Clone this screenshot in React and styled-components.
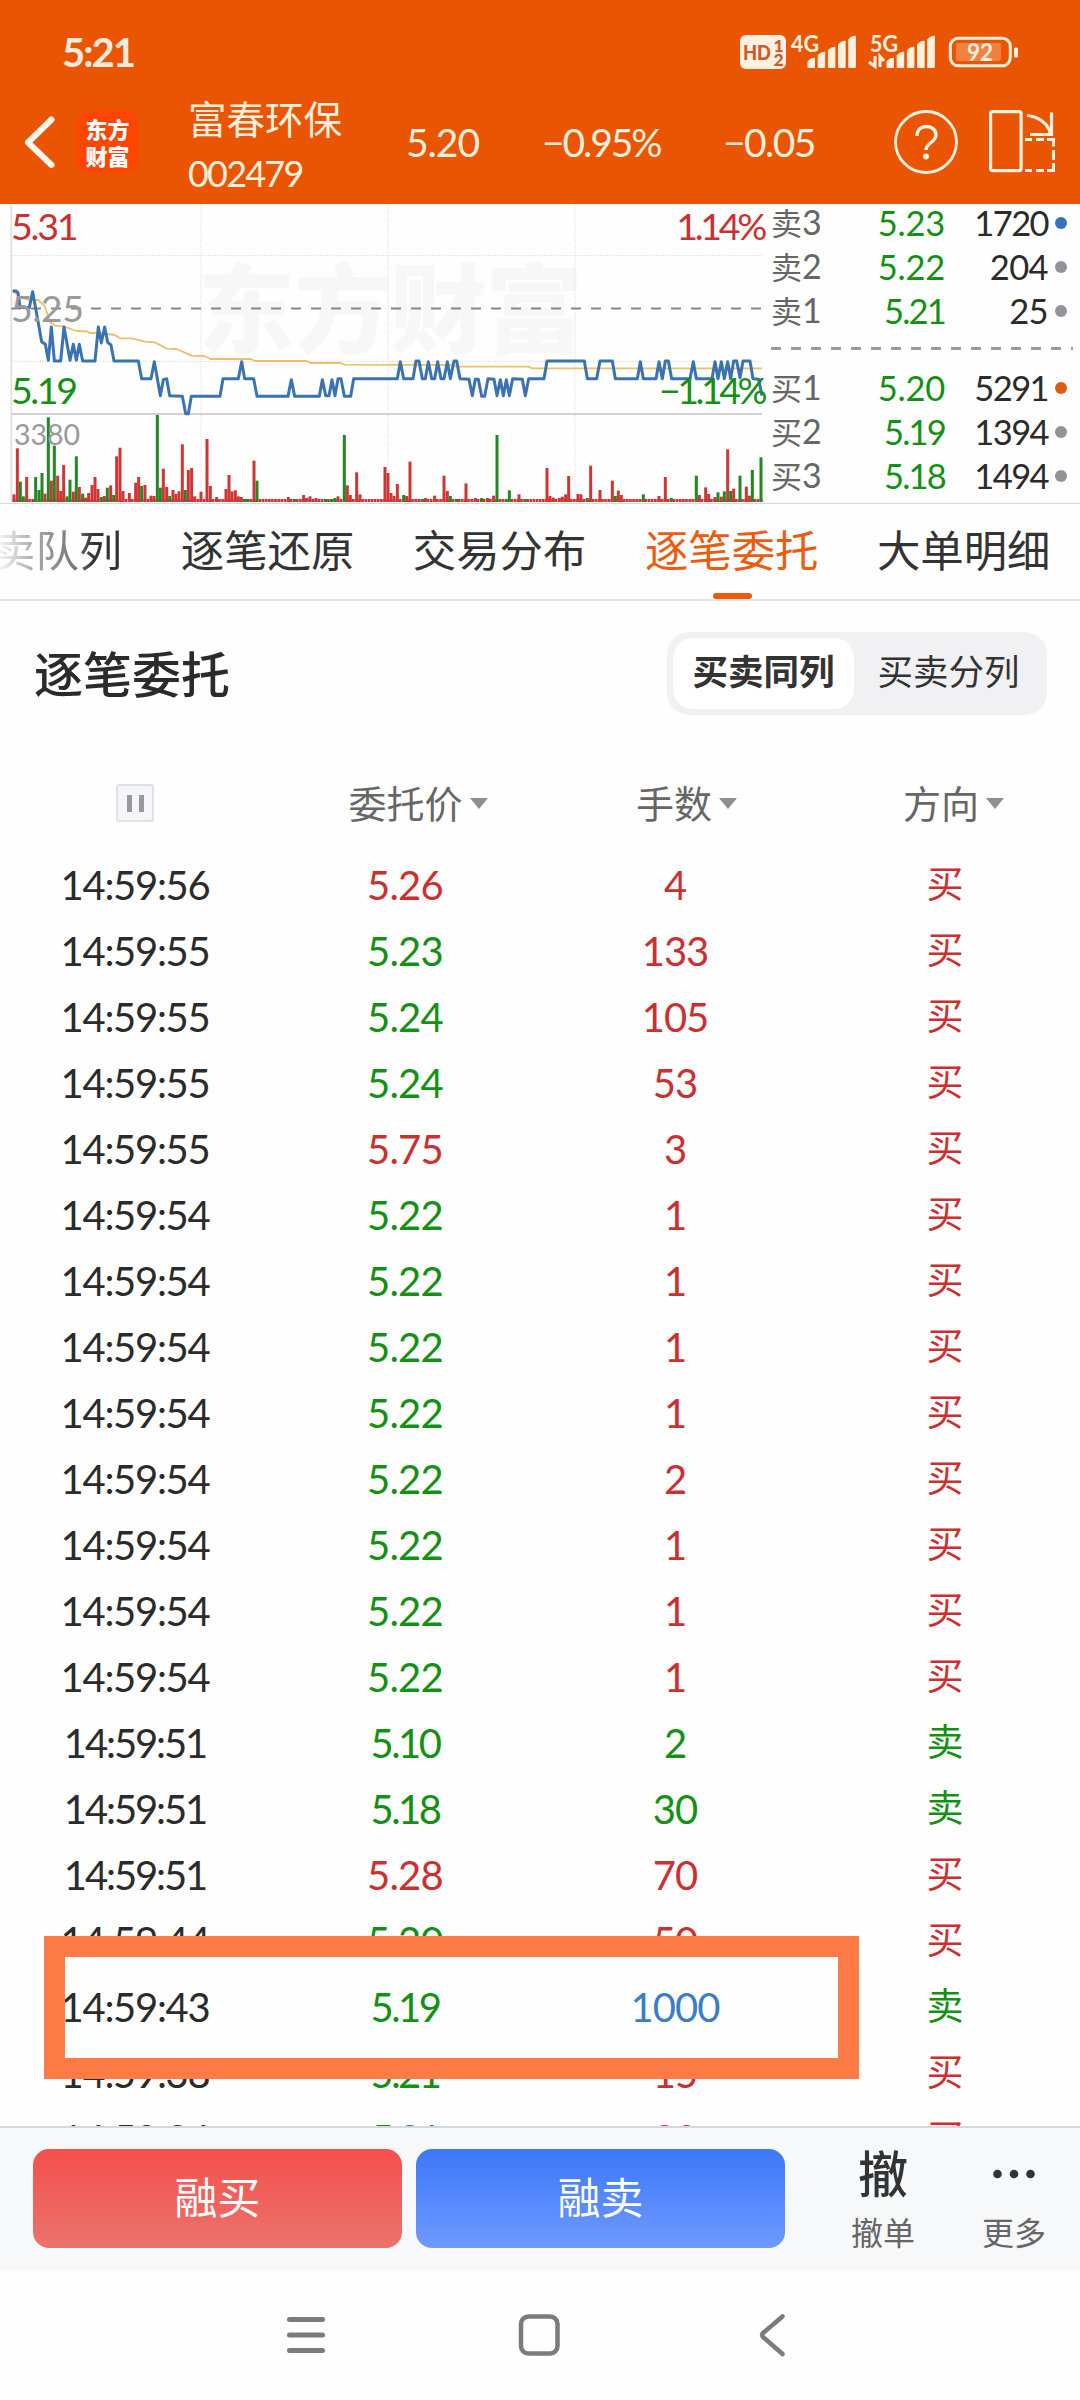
import React from "react";
import styled, { createGlobalStyle } from "styled-components";

const GlobalStyle = createGlobalStyle`
  * { box-sizing: border-box; }
  body {
    margin: 0;
    background: #fefefe;
    font-family: Lato, "Noto Sans CJK SC", sans-serif;
    color: #2b2b2b;
  }
`;

const C = {
  red: "#cb3030",
  green: "#149014",
  blue: "#3c7dc4",
  grey: "#666",
  cream: "#fff1de",
  brand: "#ea5504",
};

const Screen = styled.div`
  width: 1080px;
  height: 2400px;
  display: flex;
  flex-direction: column;
  overflow: hidden;
  background: #fefefe;
`;

const Txt = styled.span`
  display: block;
  white-space: nowrap;
  font-size: ${(p) => p.$size}px;
  line-height: ${(p) => p.$lh || p.$size}px;
  font-weight: ${(p) => p.$weight || 400};
  letter-spacing: ${(p) => p.$track || 0}px;
  color: ${(p) => p.$color || "inherit"};
`;

/* ---------- header ---------- */
const Header = styled.header`
  height: 204px;
  flex: none;
  background: ${C.brand};
  color: ${C.cream};
`;

const StatusBar = styled.div`
  height: 96px;
  display: flex;
  align-items: center;
  justify-content: space-between;
  padding: 8px 62px 0 62px;
`;

const StatusIcons = styled.svg`
  display: block;
  width: 280px;
  height: 40px;
  text {
    font-family: Lato, sans-serif;
    font-weight: 700;
  }
`;

const TitleBar = styled.div`
  height: 92px;
  display: flex;
  align-items: center;
  padding-left: 22px;
`;

const Logo = styled.div`
  width: 61px;
  height: 62px;
  margin-left: 20px;
  border-radius: 13px;
  background: #ff4503;
  color: #fff;
  display: grid;
  place-content: center;
  font: 900 22px/27px "Noto Sans CJK SC", sans-serif;
`;

const StockName = styled.div`
  width: 218px;
  margin-left: 50px;
  padding-top: 8px;
  display: flex;
  flex-direction: column;
  gap: 14px;
`;

const Quote = styled.div`
  width: ${(p) => p.$w}px;
`;

const LayoutWrap = styled.div`
  margin-left: 28px;
`;

const BackIcon = () => (
  <svg width="35" height="60" viewBox="0 0 35 60" fill="none">
    <path d="M29.5 7.5 6 30.5l23.500 22.500" stroke="#fff8ee" strokeWidth="6" strokeLinecap="round" strokeLinejoin="round" />
  </svg>
);

const HelpIcon = () => (
  <svg width="66" height="66" viewBox="0 0 66 66" fill="none" stroke={C.cream}>
    <circle cx="33" cy="33" r="30.500" strokeWidth="2.800" />
    <path d="M24 27c0-6 4-9.500 9.500-9.500S43 21 43 26c0 7-10 8-10 15" strokeWidth="3.400" />
    <circle cx="33" cy="47.500" r="3" fill={C.cream} stroke="none" />
  </svg>
);

const LayoutIcon = () => (
  <svg width="70" height="66" viewBox="0 0 70 66" fill="none" stroke={C.cream} strokeWidth="3.200">
    <rect x="3.600" y="3.600" width="30.500" height="59" rx="2" />
    <path d="M40 7.500C51 8.500 61 15 63.500 25.500" />
    <path d="M64.500 4.500V26.500H43" />
    <path d="M38 31.500h7M49 31.500h8M60 31.500h6.500v7M66.500 42v10M66.500 55v7.500H60M57 62.500h-8M45 62.500h-7" strokeWidth="3" />
  </svg>
);

const signal = (x) =>
  [8, 14, 19, 25, 30].map((h, i) => (
    <path key={i} d={`M${x + i * 10.200} 36V${38 - h}q1-2.500 6.500-3.500V36z`} fill={C.cream} stroke={C.cream} strokeLinejoin="round" />
  ));

const StatusGlyphs = () => (
  <StatusIcons viewBox="738 32 280 40">
    <rect x="740" y="35" width="46" height="34" rx="6" fill="#fff0e4" />
    <text x="743" y="60" fontSize="21.500" fill="#cf5a1d" textLength="28" lengthAdjust="spacingAndGlyphs" style={{ fontWeight: 900 }}>HD</text>
    <text x="773.500" y="51.500" fontSize="17.500" fill="#cf5a1d" style={{ fontWeight: 900 }}>1</text>
    <text x="773.500" y="66" fontSize="17.500" fill="#cf5a1d" style={{ fontWeight: 900 }}>2</text>
    <text x="791" y="51.500" fontSize="22.500" fill={C.cream} textLength="28" lengthAdjust="spacingAndGlyphs">4G</text>
    <g transform="translate(0 31.500)">{signal(808)}{signal(887)}</g>
    <text x="870" y="51.500" fontSize="22.500" fill={C.cream} textLength="28" lengthAdjust="spacingAndGlyphs">5G</text>
    <path d="M875 56v10.500l-6-4.500M880 67V56.500l4 4.500" fill="none" stroke={C.cream} strokeWidth="3" />
    <rect x="950.300" y="38.300" width="60" height="27.500" rx="8" fill="none" stroke={C.cream} strokeWidth="3" />
    <rect x="956" y="43" width="45" height="18" rx="2" fill="#f2803f" />
    <text x="967" y="61" fontSize="25" fill={C.cream} textLength="26" lengthAdjust="spacingAndGlyphs">92</text>
    <rect x="1014" y="47.500" width="4" height="10" rx="1.500" fill={C.cream} />
  </StatusIcons>
);

/* ---------- market panel ---------- */
const Market = styled.section`
  height: 300px;
  flex: none;
  display: flex;
  border-bottom: 1px solid #d9d9d9;
`;

const ChartBox = styled.div`
  position: relative;
  width: 764px;
  height: 299px;
`;

const ChartSvg = styled.svg`
  position: relative;
  display: block;
  width: 764px;
  height: 299px;
`;

const ChartLabel = styled(Txt)`
  position: absolute;
  top: ${(p) => p.$top}px;
  ${(p) => (p.$right !== undefined ? `right: ${p.$right}px;` : `left: ${p.$left}px;`)}
`;

const Watermark = styled(Txt)`
  position: absolute;
  left: 198px;
  top: 50px;
  font-family: "Noto Sans CJK SC", sans-serif;
`;

const priceLine =
  "38,288 48,288 54,293 60,336 88,338 98,290 125,440 136,448 145,496 154,396 163,498 182,498 192,396 210,496 220,448 229,496 238,448 248,498 285,498 295,396 304,444 314,396 323,442 333,450 342,498 415,498 425,551 453,551 463,500 481,602 490,554 500,551 509,602 547,604 557,656 565,656 574,604 660,604 669,551 715,551 725,500 734,551 761,551 771,604 864,604 874,554 884,604 958,604 967,554 977,602 987,602 996,554 1005,602 1014,551 1023,551 1033,604 1052,604 1061,551 1192,551 1201,500 1211,551 1239,551 1248,498 1257,498 1267,551 1276,551 1285,500 1295,551 1304,551 1313,500 1323,551 1332,551 1342,500 1351,551 1362,498 1370,498 1380,551 1407,553 1417,602 1426,553 1435,553 1445,604 1454,604 1464,551 1482,553 1491,602 1501,554 1510,602 1519,554 1528,602 1538,551 1567,553 1576,602 1586,551 1632,551 1641,498 1753,498 1762,551 1790,551 1800,498 1837,498 1846,551 1912,551 1921,500 1930,551 1968,551 1977,500 1987,551 1996,498 2005,498 2015,551 2070,551 2080,500 2089,551 2136,551 2145,500 2154,551 2164,500 2173,551 2183,500 2192,551 2201,498 2210,498 2220,548 2229,498 2250,498 2259,551 2276,553 2286,602";

const avgLine =
  "38,288 60,306 90,315 115,315 135,335 150,380 165,392 190,394 230,408 260,409 270,414 300,414 345,420 360,430 395,430 435,440 465,442 500,461 530,462 575,482 612,483 632,492 752,492 765,498 920,498 932,504 1023,504 1035,509 1350,510 1370,515 1585,515 1597,520 2286,520";

/* x position : bar top, "g" marks a falling minute */
const volumes =
  "42:898 52:760 61:860g 70:904g 80:846 107:846g 117:885g 126:834g 135:896 145:667g 154:857 163:752g 173:842 182:888 191:810 201:904g 210:854g 220:890 229:784g 238:876 248:896g 257:908 266:894 276:870 285:846 294:882 304:906g 313:903 322:878g 332:871 341:900g 350:784 360:758 369:888 388:894 407:863 416:846 425:873g 435:870 453:902 462:903 472:660g 481:878g 490:821 500:876 509:903g 519:885 528:897 537:889 547:748 556:885g 565:825 575:819 584:904 603:890 621:732 631:873 650:906 678:882 687:840 696:889 706:886 715:904 724:906 734:912g 743:912g 762:797 771:857g 865:906 883:912g 911:900 920:909 930:904 948:909 977:912g 995:912g 1005:909g 1014:904 1033:720g 1042:871 1051:900 1070:832 1080:898 1155:816 1164:834 1173:894 1182:903 1192:867 1211:900g 1220:903 1230:800 1267:912g 1276:909 1304:902 1332:842 1342:888 1351:903g 1370:912g 1398:865 1426:909 1445:909g 1463:909 1481:902 1491:720g 1519:912g 1528:886g 1557:898 1576:912g 1641:819 1650:903 1660:908 1678:909 1687:905 1697:898 1706:843 1734:897 1743:898 1762:909g 1772:812 1800:885 1837:857 1846:903g 1855:887 1864:900 1930:898g 1977:903 1996:846 2014:909g 2089:842g 2098:900 2117:877 2126:897 2145:906 2154:892g 2164:905 2173:889g 2183:763 2192:888g 2201:881 2220:842g 2239:875 2248:902 2257:825g 2283:787g"
    .split(" ")
    .map((s) => {
      const [x, rest] = s.split(":");
      return { x: +x, top: parseInt(rest, 10), green: rest.endsWith("g") };
    });

const baseBars = Array.from({ length: 241 }, (_, i) => 42 + i * 9.34);

const Chart = () => (
  <ChartBox>
    <Watermark $size={97} $lh={97} $weight={900} $color="#f7f7f7" $track={-1}>东方财富</Watermark>
    <ChartSvg viewBox="0 27 2292 897" fill="none">
      <g stroke="#d5d5d5" strokeWidth="3" strokeDasharray="3 4">
        <path d="M36 182H2286M36 499H2286" />
        <path d="M603 30V920M1164 30V920M1725 30V920" stroke="#e2e2e2" strokeWidth="4" />
      </g>
      <path d="M34 30V920" stroke="#dedede" strokeWidth="5" />
      <path d="M34 657H2286" stroke="#d2d2d2" strokeWidth="6" />
      <path d="M34 340.500H2286" stroke="#858585" strokeWidth="6" strokeDasharray="30 30" strokeDashoffset="1" />
      <polyline points={avgLine} stroke="#ecc06a" strokeWidth="5.500" strokeLinejoin="round" />
      <polyline points={priceLine} stroke="#3b73b2" strokeWidth="9" strokeLinejoin="round" />
      {baseBars.map((x) => (
        <rect key={x} x={x - 4} y="912" width="8" height="9" fill="#cf3232" />
      ))}
      {volumes.map((v) => (
        <rect key={v.x} x={v.x - 4.500} y={v.top} width="9" height={921 - v.top} fill={v.green ? "#238823" : "#d03535"} />
      ))}
    </ChartSvg>
    <ChartLabel $left={11} $top={4} $size={37.5} $lh={36} $color={C.red} $track={-2.2}>5.31</ChartLabel>
    <ChartLabel $left={11} $top={86} $size={37.5} $lh={36} $color="#999" $track={-0.4}>5.25</ChartLabel>
    <ChartLabel $left={11} $top={168} $size={37.5} $lh={36} $color={C.green} $track={-2.4}>5.19</ChartLabel>
    <ChartLabel $left={14} $top={215} $size={28.5} $lh={30} $color="#999">3380</ChartLabel>
    <ChartLabel $right={0} $top={4} $size={37.5} $lh={36} $color={C.red} $track={-3.3}>1.14%</ChartLabel>
    <ChartLabel $right={0} $top={168} $size={37.5} $lh={36} $color={C.green} $track={-3.5}>−1.14%</ChartLabel>
  </ChartBox>
);

const OrderBook = styled.div`
  width: 316px;
  display: flex;
  flex-direction: column;
  padding: 0 13px 0 7px;
`;

const BookTop = styled.div`
  margin-top: -4px;
`;

const BookRow = styled.div`
  height: 44px;
  display: grid;
  grid-template-columns: 70px 104px 103px 20px;
  align-items: center;
  > :nth-child(2), > :nth-child(3) { text-align: right; }
`;

const BookDigit = styled.span`
  font-size: 34px;
`;

const Dot = styled.i`
  width: 12px;
  height: 12px;
  border-radius: 50%;
  margin-left: 7px;
  background: ${(p) => p.$c};
`;

const BookDivider = styled.div`
  height: 33px;
  margin-right: -6px;
  background: repeating-linear-gradient(90deg, #9a9a9a 0 10px, transparent 10px 20px) 0 15px / 100% 3px no-repeat;
`;

const sells = [["卖3", "5.23", "1720", "#3673bd"], ["卖2", "5.22", "204", "#929299"], ["卖1", "5.21", "25", "#929299"]];
const buys = [["买1", "5.20", "5291", "#e05a10"], ["买2", "5.19", "1394", "#929299"], ["买3", "5.18", "1494", "#929299"]];

/* a "1" is drawn tighter than the other digits */
const track = (text, base, perOne) => (text.includes("1") ? base - perOne : base);

const BookRows = ({ rows }) =>
  rows.map(([name, price, qty, c]) => (
    <BookRow key={name}>
      <Txt $size={31} $lh={44} $color={C.grey}>{name[0]}<BookDigit>{name[1]}</BookDigit></Txt>
      <Txt $size={34.5} $lh={44} $color={C.green} $track={track(price, -0.2, 1.6)}>{price}</Txt>
      <Txt $size={34.5} $lh={44} $track={track(qty, -0.6, 1)}>{qty}</Txt>
      <Dot $c={c} />
    </BookRow>
  ));

/* ---------- tabs ---------- */
const Tabs = styled.nav`
  height: 97px;
  flex: none;
  display: flex;
  justify-content: flex-end;
  gap: 58.500px;
  padding-right: 29.500px;
  border-bottom: 2px solid #e4e4e4;
`;

const Tab = styled.div`
  position: relative;
  flex: none;
  padding-top: 20px;
  font-size: 43.4px;
  line-height: 52px;
  color: ${(p) => (p.$active ? "#ec5c10" : "#333")};
  ${(p) => p.$faded && `
    background: linear-gradient(90deg, transparent 45px, #aaa 85px, #777 125px, #333 145px);
    -webkit-background-clip: text;
    background-clip: text;
    color: transparent;
  `}
  &::after {
    content: "";
    display: ${(p) => (p.$active ? "block" : "none")};
    position: absolute;
    left: 50%;
    bottom: 0;
    width: 39px;
    height: 6px;
    margin-left: -19px;
    border-radius: 3px;
    background: #ee5a0c;
  }
`;

/* ---------- section heading ---------- */
const SectionHead = styled.div`
  height: 145px;
  flex: none;
  display: flex;
  align-items: center;
  justify-content: space-between;
  padding: 0 33px 0 34px;
`;

const Segmented = styled.div`
  width: 380px;
  height: 83px;
  padding: 6px;
  display: flex;
  border-radius: 22px;
  background: #f1f1f4;
`;

const Segment = styled.div`
  width: ${(p) => (p.$on ? 181 : 189)}px;
  height: 71px;
  flex: none;
  border-radius: 20px;
  text-align: center;
  font-size: 35.5px;
  line-height: 68px;
  font-weight: ${(p) => (p.$on ? 700 : 400)};
  color: #333;
  background: ${(p) => (p.$on ? "#fff" : "transparent")};
`;

/* ---------- order table ---------- */
const Table = styled.section`
  flex: 1;
  min-height: 0;
  position: relative;
  overflow: hidden;
`;

const HeadRow = styled.div`
  height: 98px;
  margin-top: 8px;
  display: grid;
  grid-template-columns: repeat(4, 270px);
  justify-items: center;
  align-items: center;
`;

const HeadCell = styled.div`
  display: flex;
  align-items: center;
  gap: 7px;
  padding-left: ${(p) => p.$shift || 0}px;
  color: ${C.grey};
`;

const Caret = styled.i`
  width: 0;
  height: 0;
  border: 9px solid transparent;
  border-top: 11px solid #8e8e93;
  border-bottom: 0;
`;

const Pause = styled.div`
  width: 38px;
  height: 38px;
  border: 2px solid #dfe1e5;
  border-radius: 3px;
  background: #f5f6f9;
  display: flex;
  justify-content: center;
  align-items: center;
  gap: 7px;
  &::before, &::after {
    content: "";
    width: 5px;
    height: 17px;
    background: #999;
  }
`;

const Row = styled.div`
  height: 66px;
  display: grid;
  grid-template-columns: repeat(4, 270px);
  justify-items: center;
  align-items: center;
`;

const Side = styled(Txt)`
  padding-bottom: 2px;
`;

const Highlight = styled.div`
  position: absolute;
  left: 44px;
  top: 1190px;
  width: 815px;
  height: 143px;
  border: 21px solid #ff7b46;
`;

const rows = [
  ["56", "5.26", "r", "4", "买"],
  ["55", "5.23", "g", "133", "买"],
  ["55", "5.24", "g", "105", "买"],
  ["55", "5.24", "g", "53", "买"],
  ["55", "5.75", "r", "3", "买"],
  ["54", "5.22", "g", "1", "买"],
  ["54", "5.22", "g", "1", "买"],
  ["54", "5.22", "g", "1", "买"],
  ["54", "5.22", "g", "1", "买"],
  ["54", "5.22", "g", "2", "买"],
  ["54", "5.22", "g", "1", "买"],
  ["54", "5.22", "g", "1", "买"],
  ["54", "5.22", "g", "1", "买"],
  ["51", "5.10", "g", "2", "卖"],
  ["51", "5.18", "g", "30", "卖"],
  ["51", "5.28", "r", "70", "买"],
  ["44", "5.20", "g", "50", "买"],
  ["43", "5.19", "g", "1000", "卖"],
  ["38", "5.21", "g", "15", "买"],
  ["34", "5.21", "g", "20", "买"],
];

/* ---------- bottom ---------- */
const ActionBar = styled.footer`
  height: 144px;
  flex: none;
  display: flex;
  align-items: flex-start;
  padding: 21px 0 0 33px;
  border-top: 2px solid #d5d8dd;
  background: #f7f8fa;
`;

const ActionButton = styled.button`
  width: 369px;
  height: 99px;
  margin-right: 14px;
  padding: 0 0 2px;
  border: 0;
  border-radius: 16px;
  font: 400 43px/52px Lato, "Noto Sans CJK SC", sans-serif;
  color: #fff;
  background: ${(p) => (p.$sell ? "linear-gradient(#3c78f8, #6e99ff)" : "linear-gradient(#f4504c, #eb736d)")};
`;

const ActionLink = styled.div`
  width: 130px;
  margin-left: ${(p) => p.$ml}px;
  display: flex;
  flex-direction: column;
  align-items: center;
  color: #333;
`;

const LinkIcon = styled.div`
  height: 62px;
  margin-top: -6px;
  display: grid;
  place-items: center;
`;

const NavBar = styled.div`
  height: 130px;
  flex: none;
  display: flex;
  justify-content: space-between;
  align-items: center;
  padding: 0 294px 0 286px;
`;

const HomeSquare = styled.svg`
  margin-right: 6px;
`;

const tabs = ["买卖队列", "逐笔还原", "交易分布", "逐笔委托", "大单明细"];

export default function App() {
  return (
    <Screen>
      <GlobalStyle />
      <Header>
        <StatusBar>
          <Txt $size={40} $lh={48} $weight={700} $color="#ffeadb" $track={-2}>5:21</Txt>
          <StatusGlyphs />
        </StatusBar>
        <TitleBar>
          <BackIcon />
          <Logo><span>东方</span><span>财富</span></Logo>
          <StockName>
            <Txt $size={38.5} $lh={40}>富春环保</Txt>
            <Txt $size={36} $lh={40} $track={-1.8}>002479</Txt>
          </StockName>
          <Quote $w={136}><Txt $size={39} $lh={44} $track={-1}>5.20</Txt></Quote>
          <Quote $w={181}><Txt $size={39} $lh={44} $track={-2.1}>−0.95%</Txt></Quote>
          <Quote $w={170}><Txt $size={39} $lh={44} $track={-1.6}>−0.05</Txt></Quote>
          <HelpIcon />
          <LayoutWrap><LayoutIcon /></LayoutWrap>
        </TitleBar>
      </Header>

      <Market>
        <Chart />
        <OrderBook>
          <BookTop><BookRows rows={sells} /></BookTop>
          <BookDivider />
          <BookRows rows={buys} />
        </OrderBook>
      </Market>

      <Tabs>
        {tabs.map((t, i) => (
          <Tab key={t} $active={i === 3} $faded={i === 0}>{t}</Tab>
        ))}
      </Tabs>

      <SectionHead>
        <Txt $size={49} $lh={60} $weight={500}>逐笔委托</Txt>
        <Segmented>
          <Segment $on>买卖同列</Segment>
          <Segment>买卖分列</Segment>
        </Segmented>
      </SectionHead>

      <Table>
        <HeadRow>
          <Pause />
          <HeadCell $shift={26}><Txt $size={38} $lh={48}>委托价</Txt><Caret /></HeadCell>
          <HeadCell $shift={23}><Txt $size={38} $lh={48}>手数</Txt><Caret /></HeadCell>
          <HeadCell $shift={17}><Txt $size={38} $lh={48}>方向</Txt><Caret /></HeadCell>
        </HeadRow>
        {rows.map(([sec, price, pc, qty, side], i) => {
          const sideColor = side === "买" ? C.red : C.green;
          return (
            <Row key={i}>
              <Txt $size={40} $lh={48} $track={track(sec, -1.3, 0.8)}>14:59:{sec}</Txt>
              <Txt $size={40} $lh={48} $track={track(price, -0.8, 1.7)} $color={pc === "r" ? C.red : C.green}>{price}</Txt>
              <Txt $size={40} $lh={48} $track={-1} $color={qty === "1000" ? C.blue : sideColor}>{qty}</Txt>
              <Side $size={37} $lh={48} $color={sideColor}>{side}</Side>
            </Row>
          );
        })}
        <Highlight />
      </Table>

      <ActionBar>
        <ActionButton>融买</ActionButton>
        <ActionButton $sell>融卖</ActionButton>
        <ActionLink $ml={19}>
          <LinkIcon><Txt $size={50} $lh={60} $weight={500}>撤</Txt></LinkIcon>
          <Txt $size={32} $lh={56} $color={C.grey}>撤单</Txt>
        </ActionLink>
        <ActionLink $ml={1}>
          <LinkIcon>
            <svg width="44" height="10" viewBox="0 0 44 10" fill="#333">
              <circle cx="5.500" cy="5" r="4.300" /><circle cx="22" cy="5" r="4.300" /><circle cx="38.500" cy="5" r="4.300" />
            </svg>
          </LinkIcon>
          <Txt $size={32} $lh={56} $color={C.grey}>更多</Txt>
        </ActionLink>
      </ActionBar>

      <NavBar>
        <svg width="40" height="44" viewBox="0 0 40 44" stroke="#7b7b7b" strokeWidth="5" strokeLinecap="round">
          <path d="M3.500 6.500h33M3.500 22h33M3.500 37.500h33" />
        </svg>
        <HomeSquare width="42" height="44" viewBox="0 0 42 44" fill="none" stroke="#7b7b7b" strokeWidth="4.500">
          <rect x="3" y="3.500" width="36.500" height="37" rx="7.500" />
        </HomeSquare>
        <svg width="28" height="44" viewBox="0 0 28 44" fill="none" stroke="#7b7b7b" strokeWidth="4.500" strokeLinecap="round">
          <path d="M24.500 3.500 5 20q-2 2 0 4l19.500 17" />
        </svg>
      </NavBar>
    </Screen>
  );
}
